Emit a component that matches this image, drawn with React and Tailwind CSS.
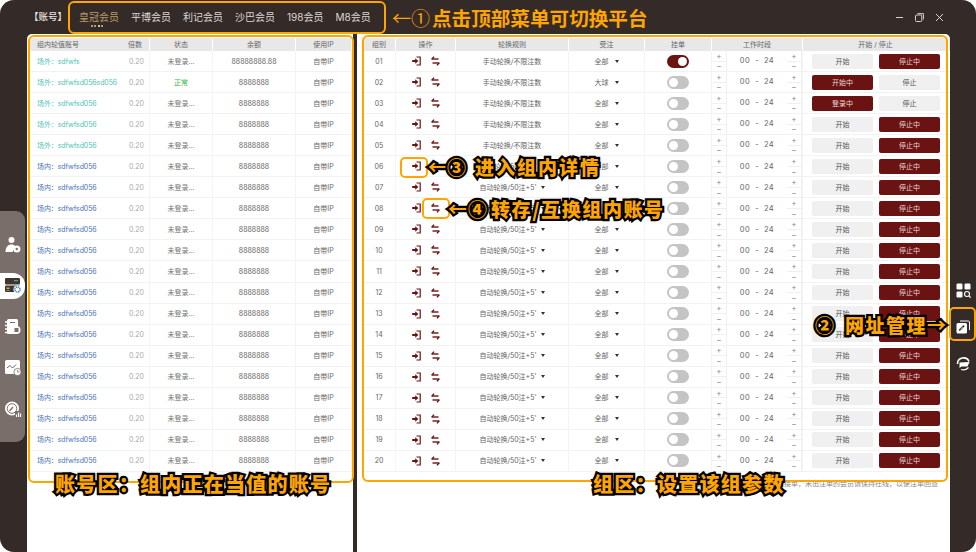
const font = { fontFamily: '"Inter","Noto Sans CJK SC",sans-serif' };

const DARK = "#6b1212";

function Login() {
  return (
    <svg width="9" height="10" viewBox="0 0 9 10" fill="none">
      <path d="M4.5 1H8.2V9H4.5" stroke={DARK} strokeWidth="1.2" />
      <path d="M0.2 4H3.2V2.2L6.4 5L3.2 7.8V6H0.2Z" fill={DARK} />
    </svg>
  );
}
function Swap() {
  return (
    <svg width="9" height="10" viewBox="0 0 9 10" fill="none">
      <path d="M0.5 3H7.5" stroke={DARK} strokeWidth="1.4" />
      <path d="M3 0.6L1 3" stroke={DARK} strokeWidth="1.4" />
      <path d="M1.5 7H8.5" stroke={DARK} strokeWidth="1.4" />
      <path d="M6 9.4L8 7" stroke={DARK} strokeWidth="1.4" />
    </svg>
  );
}
function Caret() {
  return <span className="inline-block w-0 h-0 border-l-[2.5px] border-r-[2.5px] border-t-[3px] border-l-transparent border-r-transparent border-t-[#333]" />;
}

function UserIcon() {
  return (
    <svg width="18" height="18" viewBox="0 0 18 18">
      <circle cx="7.5" cy="4" r="3" fill="#fff" />
      <path d="M1.5 16C1.5 11 4 8.5 7.5 8.5C9 8.5 10 9 11 9.8L8.5 16Z" fill="#fff" />
      <circle cx="12.8" cy="13" r="3.6" fill="#fff" />
      <circle cx="12.8" cy="13" r="1.2" fill="#7a6e6a" />
    </svg>
  );
}
function ServerIcon() {
  return (
    <svg width="18" height="18" viewBox="0 0 18 18">
      <rect x="1" y="1" width="15" height="6.5" rx="1" fill="#3e3431" />
      <rect x="1" y="8.5" width="15" height="6.5" rx="1" fill="#3e3431" />
      <rect x="10" y="3" width="4" height="1.2" fill="#3fb37f" />
      <rect x="2.5" y="10.5" width="3" height="1.5" fill="#e0b030" />
      <rect x="2.5" y="13" width="3" height="1" fill="#3fb37f" />
      <circle cx="13.5" cy="12.5" r="4" fill="#fff" />
      <circle cx="13.5" cy="12.5" r="2.6" fill="none" stroke="#2f7fd8" strokeWidth="1.4" strokeDasharray="1.4 .6" />
    </svg>
  );
}
function NoteIcon() {
  return (
    <svg width="18" height="18" viewBox="0 0 18 18">
      <rect x="3" y="1" width="11" height="15" rx="1.5" fill="#fff" />
      <path d="M1 4H5M1 7.5H5M1 11H5M1 14.5H5" stroke="#fff" strokeWidth="1.4" />
      <path d="M6 4.5H11" stroke="#7a6e6a" strokeWidth="1" />
      <circle cx="12.5" cy="12" r="4" fill="#fff" />
      <rect x="10.5" y="10" width="4" height="4" fill="#7a6e6a" />
    </svg>
  );
}
function ChartIcon() {
  return (
    <svg width="18" height="18" viewBox="0 0 18 18">
      <rect x="1" y="1" width="15" height="14" rx="1.5" fill="#fff" />
      <path d="M3 9L6 6.5L8.5 9L12 5.5" fill="none" stroke="#6d6260" strokeWidth="1" />
      <circle cx="13.5" cy="13" r="3.6" fill="#fff" stroke="#7a6e6a" strokeWidth="0.8" />
      <path d="M13.5 11V13H15.5" fill="none" stroke="#7a6e6a" strokeWidth="0.8" />
    </svg>
  );
}
function GaugeIcon() {
  return (
    <svg width="18" height="18" viewBox="0 0 18 18">
      <circle cx="8" cy="8.5" r="7" fill="#fff" />
      <circle cx="8" cy="8.5" r="4.8" fill="none" stroke="#7a6e6a" strokeWidth="1" />
      <path d="M5.5 11L9 7" stroke="#7a6e6a" strokeWidth="1.3" />
      <rect x="11" y="11" width="7" height="7" fill="#7a6e6a" />
      <path d="M12.5 17V14.5M14.5 17V12.5M16.5 17V13.5" stroke="#fff" strokeWidth="1.2" />
    </svg>
  );
}
function AppsIcon() {
  return (
    <svg width="15" height="15" viewBox="0 0 15 15">
      <rect x="0.5" y="0.5" width="6" height="6" rx="1.2" fill="#fff" />
      <rect x="8.5" y="0.5" width="6" height="6" rx="1.2" fill="#fff" />
      <rect x="0.5" y="8.5" width="6" height="6" rx="1.2" fill="#fff" />
      <circle cx="11" cy="11" r="2.5" fill="none" stroke="#fff" strokeWidth="1.1" />
      <path d="M13 13L14.7 14.7" stroke="#fff" strokeWidth="1.1" />
    </svg>
  );
}
function LinkIcon() {
  return (
    <svg width="14" height="14" viewBox="0 0 14 14">
      <path d="M4 1H12.5C13 1 13.5 1.4 13.5 2V10" fill="none" stroke="#fff" strokeWidth="1" />
      <rect x="0.5" y="3" width="10.5" height="10.5" rx="1.5" fill="#fff" />
      <path d="M3.8 9.8L7.6 6.2" stroke="#342a27" strokeWidth="1.8" strokeLinecap="round" />
      <path d="M4.6 9L6.8 7" stroke="#fff" strokeWidth="0.7" />
    </svg>
  );
}
function HeadIcon() {
  return (
    <svg width="15" height="15" viewBox="0 0 15 15">
      <path d="M1.5 8A6 6 0 0 1 13 5.5" fill="none" stroke="#fff" strokeWidth="1.6" />
      <path d="M3.5 6.5L13.5 6L11.5 10.5H5.5L3.5 12Z" fill="#fff" />
      <path d="M5 13.5C8 14.5 10.5 13.5 12.5 11.5" fill="none" stroke="#fff" strokeWidth="1.2" />
    </svg>
  );
}

const leftRows = Array.from({ length: 20 }, (_, i) => {
  const n = i + 1;
  return {
    name: n === 1 ? "sdfwfs" : n === 2 ? "sdfwfsd056sd056" : "sdfwfsd056",
    outer: n <= 5,
    ok: n === 2,
    bal: n === 1 ? "88888888.88" : "8888888",
  };
});
const rightRows = Array.from({ length: 20 }, (_, i) => {
  const n = i + 1;
  return {
    id: String(n).padStart(2, "0"),
    manual: n <= 5,
    bet: n === 2 ? "大球" : "全部",
    on: n === 1,
    start: n === 2 ? "开始中" : n === 3 ? "登录中" : "开始",
    stop: n === 2 || n === 3 ? "停止" : "停止中",
  };
});

const leftCols = "grid grid-cols-[120px_63px_83px_56px]";
const rightCols = "grid grid-cols-[33px_60px_113px_76px_67px_91px_146px]";
const headCell = "flex items-center justify-center border-r border-white text-[#666] h-[13px]";
const cell = "flex items-center justify-center text-[#666] border-r border-[#f4f4f4]";

function Btn({ children, active }) {
  return (
    <span className={active
      ? "w-[61px] h-[15px] rounded-[2px] bg-[#6b1212] text-[#e8d8d8] flex items-center justify-center"
      : "w-[61px] h-[15px] rounded-[2px] bg-[#f0f0f0] text-[#555] flex items-center justify-center"}>
      {children}
    </span>
  );
}
function Stepper() {
  return (
    <div className="w-[15px] h-full flex flex-col text-[#888] text-[8px] leading-none">
      <span className="flex-1 flex items-center justify-center border-b border-r border-[#f0f0f0]">+</span>
      <span className="flex-1 flex items-center justify-center border-r border-[#f0f0f0]">−</span>
    </div>
  );
}

function LeftTable() {
  return (
    <div className="text-[7px] leading-none">
      <div className={`${leftCols} bg-[#e8e8e8]`}>
        <div className="h-[13px] flex items-center justify-between pl-[7px] pr-[7px] text-[#666] border-r border-white">
          <span>组内轮值账号</span><span>倍数</span>
        </div>
        <div className={headCell}>状态</div>
        <div className={headCell}>余额</div>
        <div className={headCell}>使用IP</div>
      </div>
      {leftRows.map((r, i) => (
        <div key={i} className={`${leftCols} h-[21.05px] border-b border-[#f2f2f2]`}>
          <div className="flex items-center justify-between pl-[7px] pr-[5px] border-r border-[#f4f4f4]">
            <span className={r.outer ? "text-[#4fc3b5] tracking-[-0.1px]" : "text-[#4a74b8] tracking-[-0.1px]"}>{r.outer ? "场外：" : "场内："}{r.name}</span>
            <span className="text-[#aaa]">0.20</span>
          </div>
          <div className={cell}><span className={r.ok ? "text-[#35b548]" : "text-[#777]"}>{r.ok ? "正常" : "未登录..."}</span></div>
          <div className={cell}>{r.bal}</div>
          <div className={cell}>自带IP</div>
        </div>
      ))}
    </div>
  );
}

function RightTable() {
  return (
    <div className="text-[7px] leading-none">
      <div className={`${rightCols} bg-[#e8e8e8]`}>
        {["组别", "操作", "轮换规则", "受注", "挂单", "工作时段", "开始 / 停止"].map((h) => (
          <div key={h} className={headCell}>{h}</div>
        ))}
      </div>
      {rightRows.map((r) => (
        <div key={r.id} className={`${rightCols} h-[21.05px] border-b border-[#f2f2f2]`}>
          <div className={cell}>{r.id}</div>
          <div className={`${cell} gap-[10px]`}><Login /><Swap /></div>
          <div className={`${cell} gap-[4px]`}>
            {r.manual ? "手动轮换/不限注数" : <><span>自动轮换/50注+5'</span><Caret /></>}
          </div>
          <div className={`${cell} gap-[6px]`}><span>{r.bet}</span><Caret /></div>
          <div className={cell}>
            <span className={r.on
              ? "w-[22px] h-[13px] rounded-full bg-[#6b1212] flex items-center justify-end px-[2px]"
              : "w-[22px] h-[13px] rounded-full bg-[#c4c4c4] flex items-center px-[2px]"}>
              <span className="w-[9px] h-[9px] rounded-full bg-white" />
            </span>
          </div>
          <div className="flex items-stretch justify-between border-r border-[#f4f4f4] text-[#666] text-[7.5px]">
            <Stepper />
            <span className="self-center tracking-[0.4px]">00&nbsp;&nbsp;-&nbsp;&nbsp;24</span>
            <Stepper />
          </div>
          <div className="flex items-center justify-center gap-[6px]">
            <Btn active={r.start !== "开始"}>{r.start}</Btn>
            <Btn active={r.stop === "停止中"}>{r.stop}</Btn>
          </div>
        </div>
      ))}
      <div className="mt-[8px] pr-[12px] text-right text-[#888] text-[7px]">
        提示：组内账号到达工作时段后自动开盘接单，未出注单的会员请保持在线，以便注单回查
      </div>
    </div>
  );
}

const callout = "absolute flex items-center font-black text-[#ffa500] whitespace-nowrap leading-none font-['Noto_Sans_CJK_SC'] [-webkit-text-stroke:4.5px_#000] [paint-order:stroke_fill]";
const frame = "absolute border-[2.5px] border-[#ffa500]";

export default function App() {
  return (
    <div className="w-[976px] h-[552px] bg-white overflow-hidden" style={font}>
      <div className="relative w-full h-full rounded-[14px] bg-[#342a27] flex flex-col overflow-hidden">
        <header className="h-[34px] flex items-center text-[10px] text-[#dcd7d3] shrink-0">
          <span className="ml-[29px] w-[50px] text-[9.5px] font-medium text-[#e8e4e0]">【账号】</span>
          <nav className="flex gap-[12px] leading-none">
            <span className="relative text-[#b99a6a]">
              皇冠会员
              <span className="absolute left-[12px] top-[13px] flex gap-[1.5px]">
                <i className="w-[1.5px] h-[1.5px] bg-[#b99a6a]" /><i className="w-[2px] h-[2px] bg-[#b99a6a]" /><i className="w-[2px] h-[2px] bg-[#d8c29a]" /><i className="w-[1.5px] h-[1.5px] bg-[#b99a6a]" />
              </span>
            </span>
            <span>平博会员</span>
            <span>利记会员</span>
            <span>沙巴会员</span>
            <span>198会员</span>
            <span>M8会员</span>
          </nav>
          <div className="ml-auto mr-[32px] flex items-center gap-[11px] text-white">
            <svg width="9" height="9" viewBox="0 0 9 9"><path d="M1 4.5H8" stroke="#e8e4e0" strokeWidth="0.9" /></svg>
            <svg width="9" height="9" viewBox="0 0 9 9" fill="none"><rect x="0.5" y="2" width="6.3" height="6.5" rx="1" stroke="#e8e4e0" strokeWidth="0.9" /><path d="M2.5 .6H8.4V6.5" stroke="#e8e4e0" strokeWidth="0.9" /></svg>
            <svg width="9" height="9" viewBox="0 0 9 9"><path d="M1 1L8 8M8 1L1 8" stroke="#e8e4e0" strokeWidth="0.9" /></svg>
          </div>
        </header>

        <main className="flex-1 flex min-h-0">
          <aside className="w-[27px] shrink-0">
            <div className="mt-[177px] w-[25px] h-[231px] rounded-r-[9px] bg-[#7a6e6a] flex flex-col items-start pt-[21px]">
              <div className="w-[25px] h-[26px] flex items-center justify-center mb-[15px]"><UserIcon /></div>
              <div className="w-[25px] h-[26px] flex items-center justify-center rounded-r-[12px] bg-white mb-[15px]"><ServerIcon /></div>
              <div className="w-[25px] h-[26px] flex items-center justify-center mb-[15px]"><NoteIcon /></div>
              <div className="w-[25px] h-[26px] flex items-center justify-center mb-[15px]"><ChartIcon /></div>
              <div className="w-[25px] h-[26px] flex items-center justify-center"><GaugeIcon /></div>
            </div>
          </aside>
          <section className="w-[326px] shrink-0 bg-white rounded-tl-[5px] pt-[4px] pl-[3px]"><LeftTable /></section>
          <div className="w-[4px] shrink-0" />
          <section className="w-[593px] shrink-0 bg-white rounded-tr-[5px] pt-[4px] pl-[6px]"><RightTable /></section>
          <aside className="flex-1 flex flex-col items-center pt-[249px] gap-[22px]">
            <AppsIcon />
            <LinkIcon />
            <HeadIcon />
          </aside>
        </main>

        {/* annotation overlays */}
        <div className={`${frame} left-[68px] top-[1px] w-[318px] h-[33px] rounded-[6px]`} />
        <div className={`${frame} left-[28px] top-[35px] w-[326px] h-[448px] rounded-[6px]`} />
        <div className={`${frame} left-[362px] top-[35px] w-[586px] h-[447px] rounded-[6px]`} />
        <div className={`${frame} left-[400px] top-[157px] w-[28px] h-[21px] rounded-[5px]`} />
        <div className={`${frame} left-[422px] top-[198px] w-[28px] h-[21px] rounded-[5px]`} />
        <div className={`${frame} left-[949px] top-[307px] w-[27px] h-[34px] rounded-[5px]`} />

        <div className="absolute left-[392px] top-[8px] flex items-center font-['Noto_Sans_CJK_SC'] font-bold text-[#ffa500] whitespace-nowrap leading-none">
          <span className="w-[19px] text-[19px] font-normal">←</span>
          <span className="w-[21px] text-[19px] font-normal">①</span>
          <span className="text-[19.6px]">点击顶部菜单可切换平台</span>
        </div>
        <div className={`${callout} left-[428px] top-[157px] text-[19px]`}>
          <span className="w-[19px] font-bold">←</span>
          <span className="w-[28px]">③</span>
          <span className="tracking-[2px]">进入组内详情</span>
        </div>
        <div className={`${callout} left-[448px] top-[199px] text-[19px]`}>
          <span className="w-[20px] font-bold">←</span>
          <span className="w-[23px]">④</span>
          <span className="tracking-[1.6px]">转存/互换组内账号</span>
        </div>
        <div className={`${callout} left-[815px] top-[315px] text-[19px]`}>
          <span className="w-[30px]">②</span>
          <span className="tracking-[1.5px]">网址管理</span>
          <span className="font-bold">→</span>
        </div>
        <div className={`${callout} left-[55px] top-[474px] text-[20px] tracking-[1.25px]`}>账号区：组内正在当值的账号</div>
        <div className={`${callout} left-[593px] top-[474px] text-[20px] tracking-[1.3px]`}>组区：设置该组参数</div>
      </div>
    </div>
  );
}
